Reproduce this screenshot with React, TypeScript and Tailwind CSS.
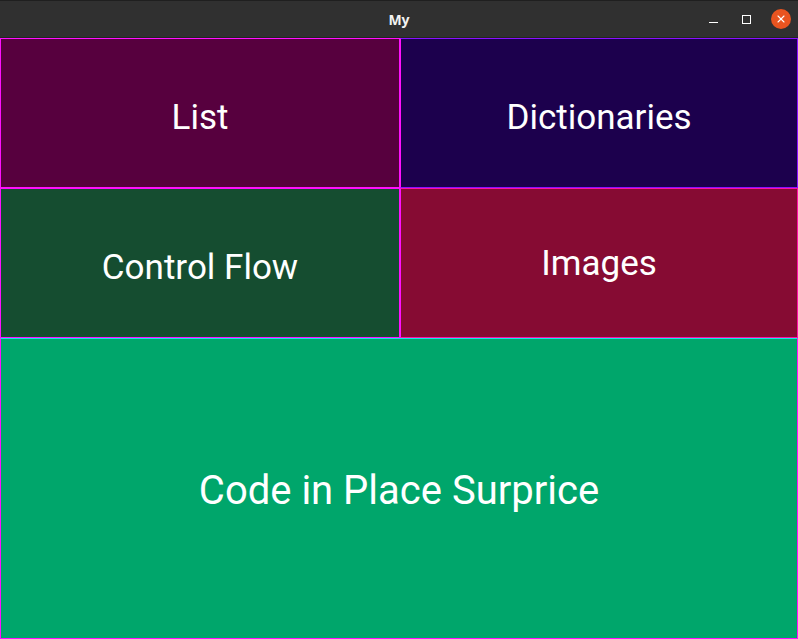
import { X } from 'lucide-react';

const font = { fontFamily: 'Roboto, "Noto Sans", sans-serif' };

export default function App() {
  return (
    <div className="w-[798px] h-[639px] flex flex-col bg-[#1e1e1e] overflow-hidden" style={font}>
      <div className="h-[1px] bg-[#1f1f1f]"></div>
      <div className="h-[37px] bg-[#303030] relative flex items-center justify-center border-b border-[#242424]">
        <span className="text-[14px] font-bold text-[#f2f2f2]" style={{ fontFamily: '"Noto Sans", "DejaVu Sans", sans-serif' }}>My</span>
        <div className="absolute right-[7px] top-0 h-full flex items-center">
          <div className="w-[9px] h-[1px] bg-white mt-[6px]"></div>
          <div className="w-[9px] h-[9px] border border-white ml-[24px]"></div>
          <div className="w-[20px] h-[20px] rounded-full bg-[#e95420] flex items-center justify-center ml-[20px]">
            <X className="w-[12px] h-[12px] text-white" strokeWidth={2.2} />
          </div>
        </div>
      </div>
      <div className="flex-1 flex flex-col text-white">
        <div className="flex h-[150px]">
          <div className="w-[400px] bg-[#57003e] border border-[#ff10ff] flex items-center justify-center pt-[10px] text-[35px]">List</div>
          <div className="flex-1 bg-[#1c004d] border border-[#8a10ff] border-l-[#ff10ff] flex items-center justify-center pt-[10px] text-[35px]">Dictionaries</div>
        </div>
        <div className="flex h-[150px]">
          <div className="w-[400px] bg-[#154d30] border border-[#ff10ff] flex items-center justify-center pt-[10px] text-[35px]">Control Flow</div>
          <div className="flex-1 bg-[#860b33] border border-[#ff10a8] border-l-[#ff10ff] flex items-center justify-center pt-[2px] text-[35px]">Images</div>
        </div>
        <div className="flex-1 bg-[#00a66b] border border-[#ff10ff] border-t-[#10e8e8] flex items-center justify-center pt-[4px] text-[40px]">Code in Place Surprice</div>
      </div>
    </div>
  );
}
